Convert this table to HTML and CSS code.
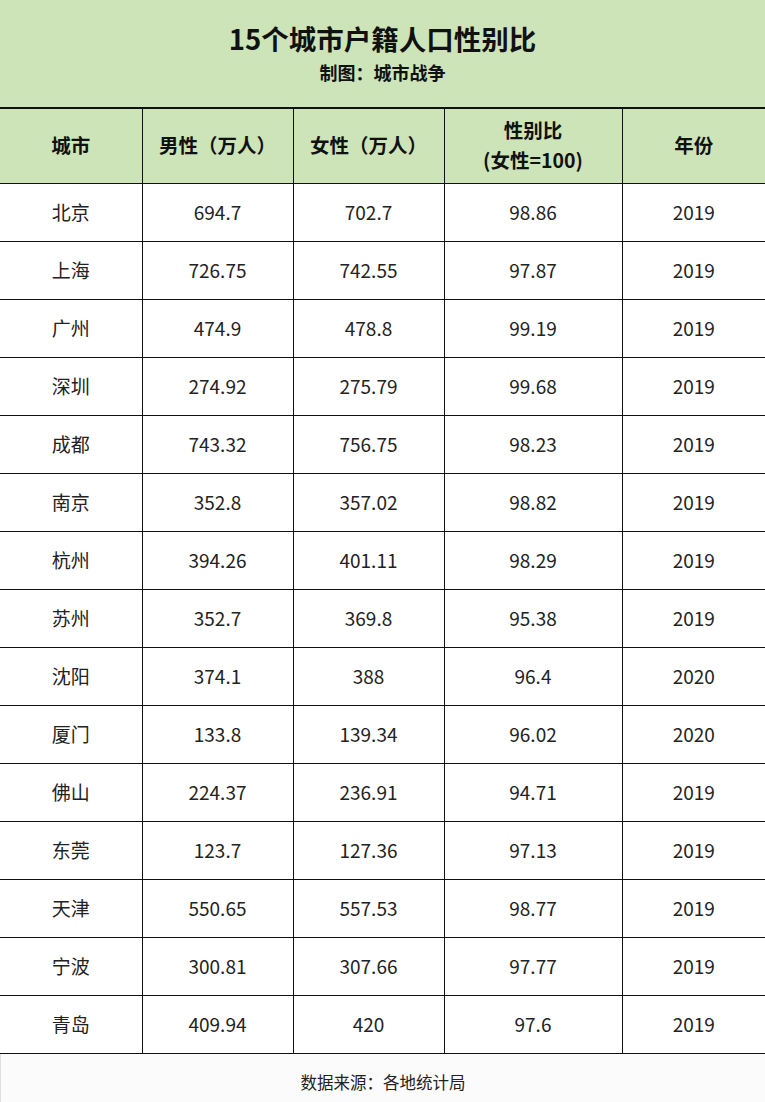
FILE: index.html
```html
<!DOCTYPE html>
<html lang="zh">
<head>
<meta charset="utf-8">
<link rel="stylesheet" href="styles.css">
</head>
<body>
<div class="page">
  <div class="head">
    <div class="title">15个城市户籍人口性别比</div>
    <div class="sub">制图：城市战争</div>
  </div>
  <table class="tbl">
    <colgroup>
      <col class="c1"><col class="c2"><col class="c3"><col class="c4"><col class="c5">
    </colgroup>
    <thead>
      <tr><th>城市</th><th>男性（万人）</th><th>女性（万人）</th><th>性别比<br>(女性=100)</th><th>年份</th></tr>
    </thead>
    <tbody>
      <tr><td>北京</td><td>694.7</td><td>702.7</td><td>98.86</td><td>2019</td></tr>
      <tr><td>上海</td><td>726.75</td><td>742.55</td><td>97.87</td><td>2019</td></tr>
      <tr><td>广州</td><td>474.9</td><td>478.8</td><td>99.19</td><td>2019</td></tr>
      <tr><td>深圳</td><td>274.92</td><td>275.79</td><td>99.68</td><td>2019</td></tr>
      <tr><td>成都</td><td>743.32</td><td>756.75</td><td>98.23</td><td>2019</td></tr>
      <tr><td>南京</td><td>352.8</td><td>357.02</td><td>98.82</td><td>2019</td></tr>
      <tr><td>杭州</td><td>394.26</td><td>401.11</td><td>98.29</td><td>2019</td></tr>
      <tr><td>苏州</td><td>352.7</td><td>369.8</td><td>95.38</td><td>2019</td></tr>
      <tr><td>沈阳</td><td>374.1</td><td>388</td><td>96.4</td><td>2020</td></tr>
      <tr><td>厦门</td><td>133.8</td><td>139.34</td><td>96.02</td><td>2020</td></tr>
      <tr><td>佛山</td><td>224.37</td><td>236.91</td><td>94.71</td><td>2019</td></tr>
      <tr><td>东莞</td><td>123.7</td><td>127.36</td><td>97.13</td><td>2019</td></tr>
      <tr><td>天津</td><td>550.65</td><td>557.53</td><td>98.77</td><td>2019</td></tr>
      <tr><td>宁波</td><td>300.81</td><td>307.66</td><td>97.77</td><td>2019</td></tr>
      <tr><td>青岛</td><td>409.94</td><td>420</td><td>97.6</td><td>2019</td></tr>
    </tbody>
  </table>
  <div class="foot">数据来源：各地统计局</div>
</div>
</body>
</html>
```
FILE: styles.css
```css
html, body {
  margin: 0;
  padding: 0;
  background: #ffffff;
}
.page {
  width: 765px;
  font-family: "Noto Sans CJK SC", "Microsoft YaHei", sans-serif;
  color: #1a1a1a;
}
.head {
  background: #cde4b9;
  height: 107px;
  box-sizing: border-box;
  padding-top: 19px;
  text-align: center;
}
.title {
  font-size: 27.5px;
  font-weight: 700;
  line-height: 38px;
  color: #111;
}
.sub {
  font-size: 18px;
  font-weight: 700;
  line-height: 30px;
  color: #111;
}
.tbl {
  width: 765px;
  border-collapse: collapse;
  table-layout: fixed;
}
.c1 { width: 142px; }
.c2 { width: 151px; }
.c3 { width: 151px; }
.c4 { width: 178px; }
.c5 { width: 143px; }
.tbl th, .tbl td {
  border: 1px solid #111;
  text-align: center;
  padding: 0;
}
.tbl tr > :first-child { border-left: none; }
.tbl tr > :last-child { border-right: none; }
.tbl th {
  background: #cde4b9;
  height: 72px;
  font-size: 19.5px;
  font-weight: 700;
  line-height: 30px;
  color: #111;
  border-top: 2px solid #111;
  padding-bottom: 2px;
}
.tbl td {
  height: 54px;
  font-size: 19px;
  font-weight: 400;
  color: #222;
  padding-bottom: 3px;
}
.foot {
  height: 49px;
  line-height: 56px;
  text-align: center;
  font-size: 16.5px;
  color: #222;
  background: #fbfbfb;
  border-left: 1px solid #e0e0e0;
}
```
